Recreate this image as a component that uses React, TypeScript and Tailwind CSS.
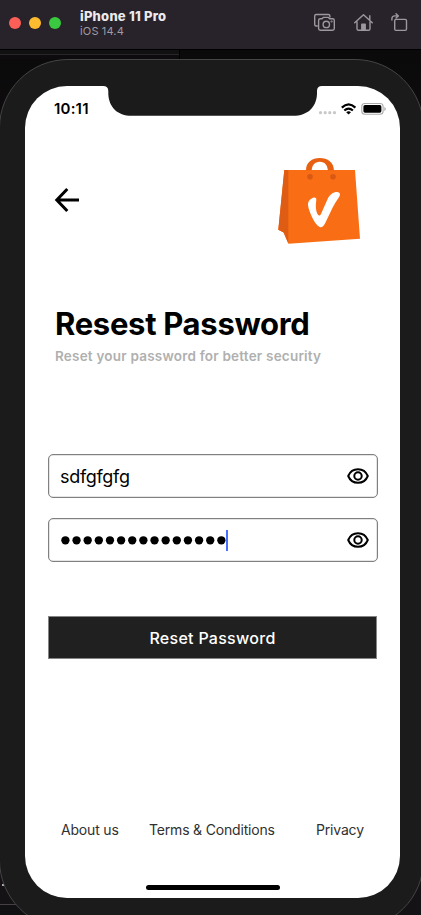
import React from "react";

function EyeIcon() {
  return (
    <svg className="h-[18px] w-[22px] shrink-0" viewBox="0 0 22 18" fill="none" stroke="#000" strokeWidth="2">
      <path d="M1.2 9C3 4.6 6.6 2.2 11 2.2S19 4.6 20.8 9c-1.8 4.4-5.4 6.8-9.8 6.8S3 13.4 1.2 9Z" strokeLinejoin="round" />
      <circle cx="11" cy="9" r="3.7" />
    </svg>
  );
}

function BagLogo() {
  return (
    <svg className="h-[88px] w-[84px]" viewBox="277 156 84 88">
      <path d="M284.3 170H355L360 238.8L288.5 243.8L283.6 232.6L278.3 229.7Z" fill="#f96e15" />
      <path d="M284.3 170H288.3V243.5L283.6 232.6L278.3 229.7Z" fill="#de5c14" />
      <path d="M306 170.3C306 162.3 311.9 158 319.8 158S333.9 162.3 333.9 170.3H327.9C327.3 165.3 325 161.8 319.8 161.8S312.2 165.3 311.7 170.3Z" fill="#e86113" />
      <circle cx="310" cy="176.7" r="2.8" fill="#d95813" />
      <circle cx="333" cy="176.7" r="2.8" fill="#d95813" />
      <path d="M308 205C307.8 202.5 308.8 200.2 311.2 198.8C314 196.8 316.8 197 316.3 200.3C315.4 205.5 315.7 211.5 318 214.8C319.3 216.6 320.5 215 321.3 213.2L327.5 199.2C330 194.3 334 191.6 338 192.2C340.5 192.8 340.5 195.2 338.8 197.4C336.5 200.4 334.6 203.8 332.8 207.2L325 223.5C323.5 226.2 321.7 228 319.7 227C316.8 225.4 314.2 221.7 312.2 217.4C310.2 213 308.4 209 308 205Z" fill="#fff" />
    </svg>
  );
}

function TitleBar() {
  return (
    <header className="flex h-[50px] shrink-0 items-start border-b border-black bg-[#28222a] pl-[9px]">
      <div className="mt-[17px] flex gap-2">
        <span className="size-3 rounded-full bg-[#fc5f57]" />
        <span className="size-3 rounded-full bg-[#fdbc30]" />
        <span className="size-3 rounded-full bg-[#3ac840]" />
      </div>
      <div className="mt-[9px] ml-[19px] whitespace-nowrap">
        <div className="text-[13px] leading-[15px] font-extrabold tracking-[0.23px] text-[#eceaec]">iPhone 11 Pro</div>
        <div className="text-[11px] leading-[14px] tracking-[0.15px] text-[#a09ca2]">iOS 14.4</div>
      </div>
      <svg className="mt-[12px] mr-[13px] ml-auto h-[22px] w-[95px]" viewBox="313 12 95 22" fill="none" stroke="#9c989e" strokeWidth="1.4" strokeLinejoin="round" strokeLinecap="round">
        <path d="M317.3 26H316.2Q314.7 26 314.7 24.5V16Q314.7 14.5 316.2 14.5H328.4Q329.9 14.5 329.9 16V17" />
        <path d="M320.3 18.8H322L323.3 17.4H328.4L329.7 18.8H332.6Q334.3 18.8 334.3 20.5V28.6Q334.3 30.3 332.6 30.3H320.3Q318.6 30.3 318.6 28.6V20.5Q318.6 18.8 320.3 18.8Z" />
        <circle cx="326.3" cy="24.4" r="3.2" />
        <circle cx="331.6" cy="21.5" r="0.4" />
        <path d="M354.7 22.8L363.5 14.7L372.3 22.8M357 21.5V28.7Q357 30.3 358.6 30.3H368.5Q370 30.3 370 28.7V21.5M369.8 19.5V15.8" />
        <path d="M361.8 30V24.3H365.2V30Z" fill="#9c989e" />
        <rect x="394.7" y="19.4" width="11.8" height="11" rx="1.3" />
        <path d="M391.9 20V18.7Q391.9 15.9 394.7 15.9H398M396 13.7L398.4 15.9L396 18" />
      </svg>
    </header>
  );
}

function StatusBar() {
  return (
    <div className="flex h-[50px] shrink-0 items-start pt-[13px] pr-[14px] pl-[29px]">
      <span className="text-[15px] leading-5 font-semibold tracking-[0.2px]">10:11</span>
      <svg className="mt-[2px] ml-auto h-[16px] w-[68px]" viewBox="318 101 68 16">
        <g fill="#c8c8c8">
          <circle cx="320.5" cy="112.7" r="1.6" />
          <circle cx="325.2" cy="112.7" r="1.6" />
          <circle cx="329.8" cy="112.7" r="1.6" />
          <circle cx="334.5" cy="112.7" r="1.6" />
        </g>
        <g fill="none" stroke="#000" strokeWidth="2.2">
          <path d="M341.8 107.6Q348.6 101.2 355.4 107.6" />
          <path d="M344.3 110.5Q348.6 106.6 352.9 110.5" />
        </g>
        <path d="M346.2 112.2Q348.6 110.5 351 112.2L348.6 114.4Z" />
        <rect x="361.8" y="103.5" width="21.3" height="10.8" rx="3" fill="none" stroke="#aaa" strokeWidth="1.1" />
        <rect x="363.4" y="105.1" width="18" height="7.6" rx="1.6" />
        <path d="M384.3 107V111Q385.8 110.4 385.8 109T384.3 107Z" fill="#aaa" />
      </svg>
    </div>
  );
}

function MaskedValue({ length }: { length: number }) {
  return (
    <svg className="h-[10px] w-[165px] shrink-0" viewBox="0 0 165 10">
      {Array.from({ length }, (_, i) => (
        <circle key={i} cx={4.4 + i * 11.14} cy="5.3" r="4.15" />
      ))}
    </svg>
  );
}

function Screen() {
  return (
    <main className="relative flex h-[812px] w-[375px] flex-col overflow-hidden rounded-[42px] bg-white text-black">
      <svg className="absolute top-0 left-[78px] h-[30px] w-[219px]" viewBox="0 0 219 30">
        <path d="M0 0Q5.3 0 5.3 5V8C6 21 14 29.8 29 29.8H190C205 29.8 213.4 21 214 8V5Q214 0 219 0Z" fill="#1b1b1b" />
      </svg>
      <StatusBar />
      <div className="mt-5 flex h-[88px] shrink-0 items-start justify-between pr-[39px] pl-[29px]">
        <svg className="mt-[31px] h-[26px] w-[26px]" viewBox="0 0 26 26" fill="none" stroke="#000" strokeWidth="3">
          <path d="M25 13H3M13.3 2L2.8 13L13.3 24" />
        </svg>
        <BagLogo />
      </div>
      <h1 className="mt-[60px] ml-[30px] text-[31px] leading-[40px] font-bold tracking-[-0.3px] whitespace-nowrap">Resest Password</h1>
      <p className="mt-[2px] ml-[30px] text-[13.5px] leading-[20px] font-semibold tracking-[0.21px] whitespace-nowrap text-[#b0b0b0]">Reset your password for better security</p>
      <form className="mt-[88px] ml-[23px] w-[330px]">
        <div className="flex h-[44px] items-center justify-between rounded-[5px] border border-[#808080] pr-[8px] pl-[11px] ring-[0.5px] ring-[#808080]/40 ring-inset">
          <span className="pt-[2px] text-[18px] leading-6 tracking-[-0.3px]">sdfgfgfg</span>
          <EyeIcon />
        </div>
        <div className="mt-5 flex h-[44px] items-center rounded-[5px] border border-[#808080] pr-[8px] pl-[12px] ring-[0.5px] ring-[#808080]/40 ring-inset">
          <MaskedValue length={15} />
          <span className="mr-auto h-[21px] w-[2px] bg-[#4870ff]" />
          <EyeIcon />
        </div>
        <button type="button" className="mt-[54px] block h-[43px] w-[329px] border border-[#858585] bg-[#202020] text-[16px] leading-5 font-medium tracking-[0.28px] text-white">Reset Password</button>
      </form>
      <footer className="mt-[161px] flex pl-[36px] text-[14px] leading-5 tracking-[-0.18px] whitespace-nowrap text-[#303030]">
        <span className="w-[88px]">About us</span>
        <span className="w-[167px]">Terms & Conditions</span>
        <span>Privacy</span>
      </footer>
      <div className="mt-auto mb-[8px] ml-[120.5px] h-[5px] w-[134px] shrink-0 rounded-full bg-black" />
    </main>
  );
}

export default function App() {
  return (
    <div className="flex h-[915px] w-[421px] flex-col overflow-hidden bg-[#0c0a0c] font-['Inter','Liberation_Sans',sans-serif]">
      <TitleBar />
      <div className="relative h-[865px] bg-linear-to-b from-[#0b0a0b] via-[#1c151a] to-[#151216]">
        <div className="h-[9px] w-[180px] border-r border-black bg-[linear-gradient(#111_0_4px,#292529_4px_5px,#0d0b0d_5px)]" />
        <div className="absolute bottom-0 left-0 h-[11px] w-[40px] border-t border-[#444046] bg-[#111012]" />
        <span className="absolute bottom-[29px] left-[2px] size-[2px] bg-[#b0adb1]" />
        <div className="relative -ml-px flex h-[870px] w-[425px] justify-start rounded-[69px] border border-[#464446] bg-[#1b1b1b] pt-[26px] pl-[25px]">
          <Screen />
        </div>
      </div>
    </div>
  );
}
